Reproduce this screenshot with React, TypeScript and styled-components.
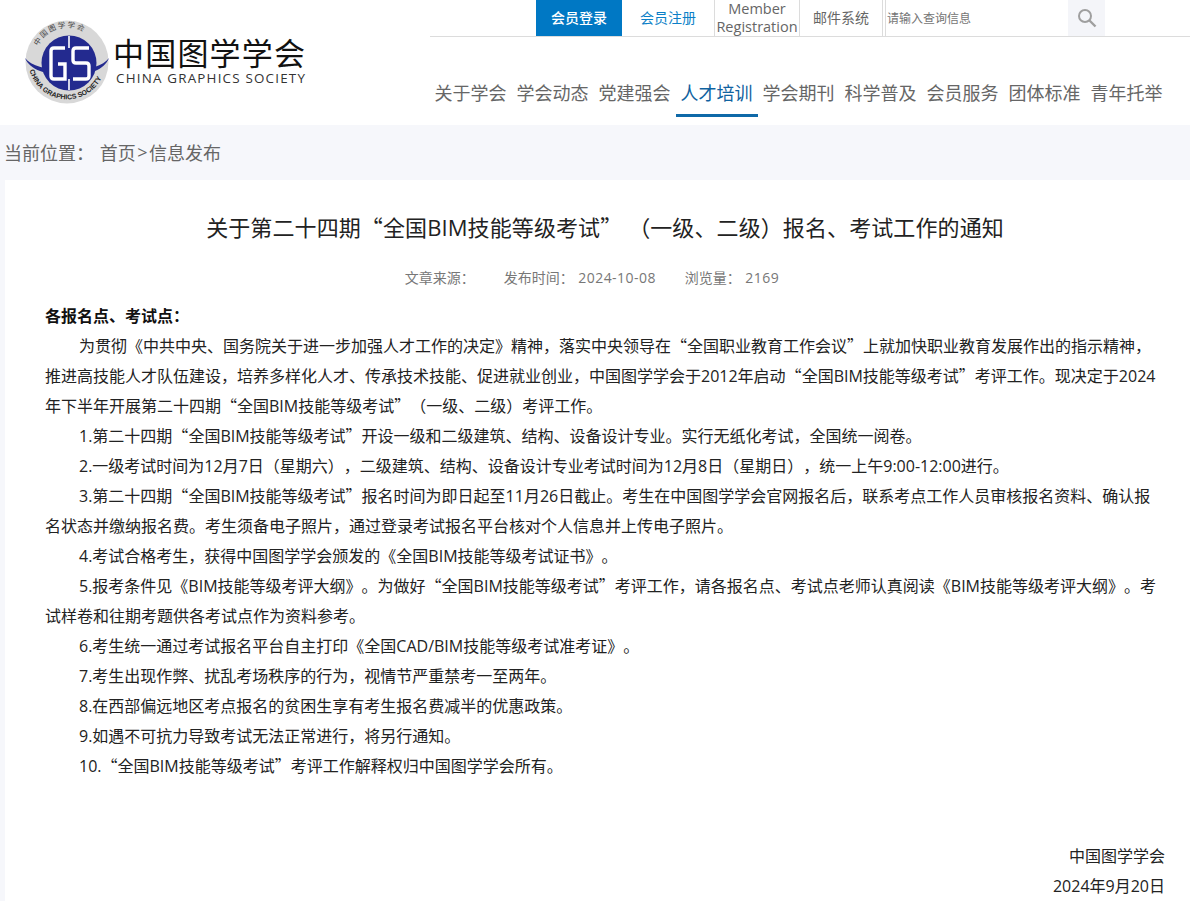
import React from "react";
import styled, { createGlobalStyle } from "styled-components";

const Global = createGlobalStyle`
  html, body { margin: 0; padding: 0; background: #fff; overflow: hidden; }
  body {
    font-family: "Open Sans", "Noto Sans CJK SC", "Liberation Sans", sans-serif;
    color: #333;
    text-spacing-trim: space-all;
  }
  * { box-sizing: border-box; }
`;

const Page = styled.div`
  width: 1190px;
  height: 901px;
  overflow: hidden;
`;

const Header = styled.header`
  height: 125px;
  display: flex;
  background: #fff;
`;

const LogoBox = styled.div`
  width: 430px;
  flex: none;
  padding: 20px 0 0 24px;
  display: flex;
  gap: 3px;
`;

const LogoWords = styled.div`
  display: flex;
  flex-direction: column;
  padding-top: 19px;
  color: #111;
`;

const LogoCn = styled.div`
  font-size: 31px;
  line-height: 29px;
  letter-spacing: 1.2px;
  white-space: nowrap;
`;

const LogoEn = styled.div`
  font-family: "Open Sans", sans-serif;
  font-size: 13.4px;
  line-height: 16px;
  margin: 2px 0 0 3px;
  letter-spacing: 1.2px;
  color: #333;
  white-space: nowrap;
`;

const HeaderMain = styled.div`
  flex: 1;
  display: flex;
  flex-direction: column;
`;

const TopBar = styled.div`
  height: 37px;
  display: flex;
  padding-left: 106px;
  border-bottom: 1px solid #dcdcdc;
`;

const TopLink = styled.div<{ $w: number; $active?: boolean; $blue?: boolean }>`
  width: ${(p) => p.$w}px;
  height: 36px;
  flex: none;
  display: flex;
  align-items: center;
  justify-content: center;
  text-align: center;
  font-size: 14px;
  line-height: 18px;
  background: ${(p) => (p.$active ? "#0078c4" : "transparent")};
  color: ${(p) => (p.$active ? "#fff" : p.$blue ? "#0b7fc7" : "#666")};
  font-weight: ${(p) => (p.$active ? 500 : 400)};
`;

const MemberLink = styled(TopLink)`
  border-left: 1px solid #dcdcdc;
  font-size: 14.5px;
`;

const MailLink = styled(TopLink)`
  border-left: 1px solid #dcdcdc;
  border-right: 1px solid #dcdcdc;
`;

const SearchInput = styled.div`
  width: 183px;
  height: 36px;
  flex: none;
  margin-left: 2px;
  border-left: 1px solid #dcdcdc;
  padding-left: 1px;
  display: flex;
  align-items: center;
  font-size: 12px;
  color: #757575;
`;

const SearchButton = styled.div`
  width: 37px;
  height: 36px;
  flex: none;
  background: #f4f5f9;
  display: flex;
  align-items: center;
  justify-content: center;
`;

const Nav = styled.nav`
  display: flex;
  padding-top: 40px;
  margin-left: -0.5px;
`;

const NavItem = styled.div<{ $active?: boolean }>`
  width: 82px;
  height: 40px;
  flex: none;
  text-align: center;
  font-size: 18px;
  line-height: 32px;
  white-space: nowrap;
  color: ${(p) => (p.$active ? "#0f62a0" : "#666")};
  border-bottom: 3px solid ${(p) => (p.$active ? "#0f69a8" : "transparent")};
`;

const Crumb = styled.div`
  height: 55px;
  background: #f6f7fb;
  padding: 0 0 2px 4px;
  display: flex;
  align-items: center;
  font-size: 18px;
  color: #666;
  white-space: pre;
`;

const CrumbHome = styled.span`
  margin-left: 1px;
`;

const CrumbSep = styled.span`
  margin: 0 1.5px;
`;

const Rail = styled.div`
  background: #f6f7fb;
`;

const Card = styled.main`
  margin-left: 5px;
  background: #fff;
  padding: 0 25px 0 40px;
`;

const Title = styled.h1`
  margin: 0;
  padding-top: 29px;
  height: 82px;
  font-size: 22px;
  line-height: 36px;
  font-weight: 400;
  letter-spacing: 0.1px;
  color: #222;
  text-align: center;
  white-space: pre;
`;

const Meta = styled.div`
  height: 30px;
  padding-right: 26px;
  display: flex;
  justify-content: center;
  align-items: center;
  gap: 29px;
  font-size: 14px;
  color: #777;
`;

const MetaItem = styled.span`
  white-space: pre;
`;

const MetaValue = styled.span`
  margin-left: 4.5px;
  letter-spacing: 0.45px;
`;

const Article = styled.article`
  margin-top: 9px;
  font-size: 16px;
  line-height: 30px;
  color: #222;
`;

const Lead = styled.p`
  margin: 0;
  font-weight: 700;
  color: #111;
`;

const Para = styled.p`
  margin: 0;
  text-indent: 34px;
`;

const Sign = styled.p<{ $top?: number }>`
  margin: ${(p) => p.$top ?? 0}px 0 0;
  text-align: right;
`;

const WideMark = styled.span`
  font-family: "Noto Sans CJK SC", sans-serif;
  line-height: 0;
`;

function Cn({ text }: { text: string }) {
  const parts = text.split(/([“”])/);
  return (
    <>
      {parts.map((part, i) =>
        part === "“" || part === "”" ? <WideMark key={i}>{part}</WideMark> : <React.Fragment key={i}>{part}</React.Fragment>
      )}
    </>
  );
}

const paragraphs = [
  "为贯彻《中共中央、国务院关于进一步加强人才工作的决定》精神，落实中央领导在“全国职业教育工作会议”上就加快职业教育发展作出的指示精神，推进高技能人才队伍建设，培养多样化人才、传承技术技能、促进就业创业，中国图学学会于2012年启动“全国BIM技能等级考试”考评工作。现决定于2024年下半年开展第二十四期“全国BIM技能等级考试”（一级、二级）考评工作。",
  "1.第二十四期“全国BIM技能等级考试”开设一级和二级建筑、结构、设备设计专业。实行无纸化考试，全国统一阅卷。",
  "2.一级考试时间为12月7日（星期六），二级建筑、结构、设备设计专业考试时间为12月8日（星期日），统一上午9:00-12:00进行。",
  "3.第二十四期“全国BIM技能等级考试”报名时间为即日起至11月26日截止。考生在中国图学学会官网报名后，联系考点工作人员审核报名资料、确认报名状态并缴纳报名费。考生须备电子照片，通过登录考试报名平台核对个人信息并上传电子照片。",
  "4.考试合格考生，获得中国图学学会颁发的《全国BIM技能等级考试证书》。",
  "5.报考条件见《BIM技能等级考评大纲》。为做好“全国BIM技能等级考试”考评工作，请各报名点、考试点老师认真阅读《BIM技能等级考评大纲》。考试样卷和往期考题供各考试点作为资料参考。",
  "6.考生统一通过考试报名平台自主打印《全国CAD/BIM技能等级考试准考证》。",
  "7.考生出现作弊、扰乱考场秩序的行为，视情节严重禁考一至两年。",
  "8.在西部偏远地区考点报名的贫困生享有考生报名费减半的优惠政策。",
  "9.如遇不可抗力导致考试无法正常进行，将另行通知。",
  "10.“全国BIM技能等级考试”考评工作解释权归中国图学学会所有。",
];

const navItems = ["关于学会", "学会动态", "党建强会", "人才培训", "学会期刊", "科学普及", "会员服务", "团体标准", "青年托举"];

function Logo() {
  return (
    <svg width="86" height="84" viewBox="0 0 86 84" style={{ flex: "none" }}>
      <defs>
        <path id="logoTop" d="M11 40 A32.5 32.5 0 0 1 76 40" />
        <path id="logoBottom" d="M5 47 A38.5 38.5 0 0 0 81 47" />
      </defs>
      <circle cx="43" cy="42" r="41.5" fill="#d8d8d8" />
      <circle cx="45" cy="43" r="27.5" fill="#232a8f" />
      <path d="M1 38 C6 50 22 55 44 55 C66 55 80 50 85 38 C79 46 66 50 44 50 C22 50 7 46 1 38Z" fill="#232a8f" />
      <g fill="none" stroke="#fff">
        <path d="M41 28H30Q27 28 27 31V56Q27 59 30 59H41V44H34" strokeWidth="3.4" />
        <path d="M65 28H52Q49 28 49 31V40Q49 43 52 43H62Q65 43 65 46V56Q65 59 62 59H49" strokeWidth="3.4" />
        <path d="M45 16V28M45 59V70" strokeWidth="1.6" />
      </g>
      <text fontSize="7.5" fill="#444" fontFamily="'Noto Sans CJK SC', sans-serif" letterSpacing="1.6">
        <textPath href="#logoTop" startOffset="14%">中国图学学会</textPath>
      </text>
      <text fontSize="7" fontWeight="700" fill="#222" fontFamily="'Liberation Sans', sans-serif">
        <textPath href="#logoBottom" startOffset="3%">CHINA GRAPHICS SOCIETY</textPath>
      </text>
    </svg>
  );
}

export default function App() {
  return (
    <Page>
      <Global />
      <Header>
        <LogoBox>
          <Logo />
          <LogoWords>
            <LogoCn>中国图学学会</LogoCn>
            <LogoEn>CHINA GRAPHICS SOCIETY</LogoEn>
          </LogoWords>
        </LogoBox>
        <HeaderMain>
          <TopBar>
            <TopLink $w={86} $active>会员登录</TopLink>
            <TopLink $w={92} $blue>会员注册</TopLink>
            <MemberLink $w={85}>Member<br />Registration</MemberLink>
            <MailLink $w={84}>邮件系统</MailLink>
            <SearchInput>请输入查询信息</SearchInput>
            <SearchButton>
              <svg width="20" height="20" viewBox="0 0 20 20" fill="none" stroke="#9f9f9f" strokeWidth="2">
                <circle cx="8" cy="8" r="6" />
                <path d="M12.5 12.5L18.5 18.5" strokeWidth="2.4" />
              </svg>
            </SearchButton>
          </TopBar>
          <Nav>
            {navItems.map((n) => (
              <NavItem key={n} $active={n === "人才培训"}>{n}</NavItem>
            ))}
          </Nav>
        </HeaderMain>
      </Header>
      <Crumb>当前位置： <CrumbHome>首页</CrumbHome><CrumbSep>&gt;</CrumbSep>信息发布</Crumb>
      <Rail>
        <Card>
          <Title><Cn text="关于第二十四期“全国BIM技能等级考试” （一级、二级）报名、考试工作的通知" /></Title>
          <Meta>
            <MetaItem>文章来源：</MetaItem>
            <MetaItem>发布时间：<MetaValue>2024-10-08</MetaValue></MetaItem>
            <MetaItem>浏览量：<MetaValue>2169</MetaValue></MetaItem>
          </Meta>
          <Article>
            <Lead>各报名点、考试点：</Lead>
            {paragraphs.map((p) => (
              <Para key={p}><Cn text={p} /></Para>
            ))}
            <Sign $top={60}>中国图学学会</Sign>
            <Sign>2024年9月20日</Sign>
          </Article>
        </Card>
      </Rail>
    </Page>
  );
}
